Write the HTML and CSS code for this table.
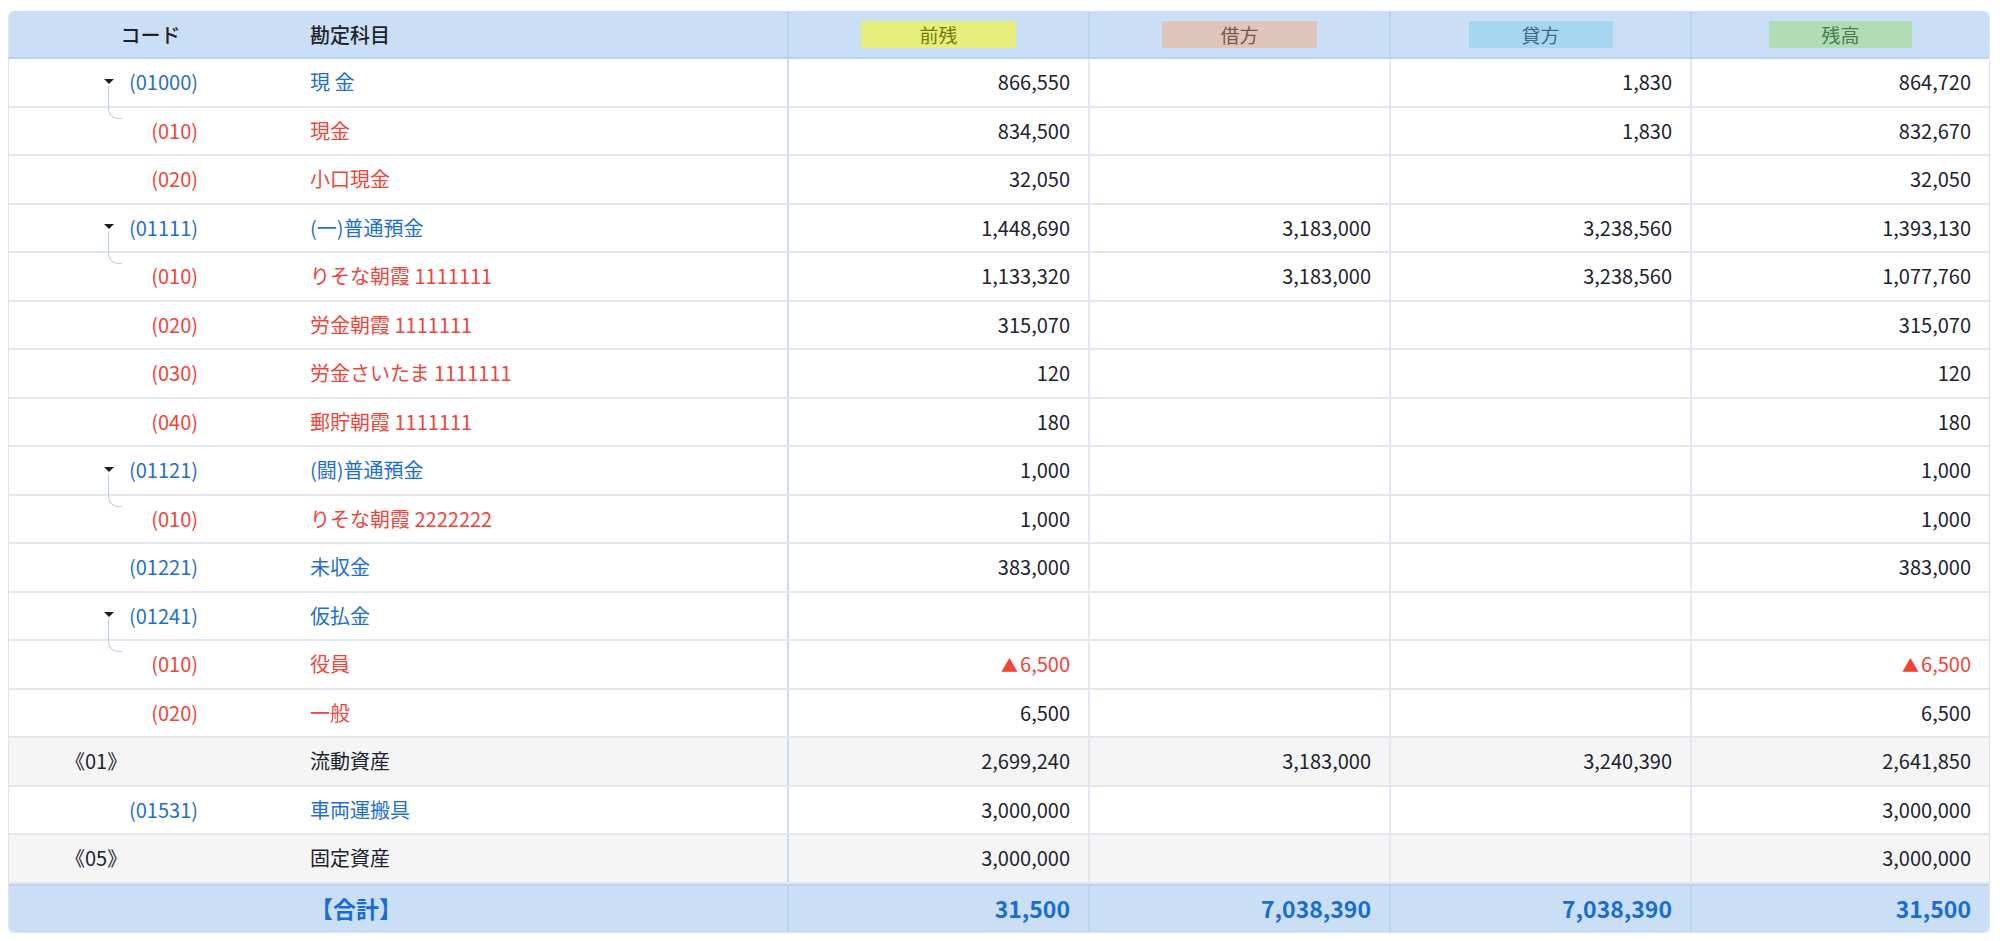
FILE: index.html
```html
<!DOCTYPE html>
<html lang="ja">
<head>
<meta charset="utf-8">
<title>残高試算表</title>
<link rel="stylesheet" href="styles.css">
</head>
<body>
<div class="page">
  <div class="sheet">
    <div class="row head">
      <div class="c code">コード</div>
      <div class="c name">勘定科目</div>
      <div class="c num first"><span class="tag t-prev">前残</span></div>
      <div class="c num"><span class="tag t-debit">借方</span></div>
      <div class="c num"><span class="tag t-credit">貸方</span></div>
      <div class="c num last"><span class="tag t-bal">残高</span></div>
    </div>

    <div class="row parent">
      <div class="c code"><span class="caret"></span><span>(01000)</span></div>
      <div class="c name">現 金</div>
      <div class="c num first">866,550</div>
      <div class="c num"></div>
      <div class="c num">1,830</div>
      <div class="c num last">864,720</div>
    </div>
    <div class="row child">
      <div class="c code">(010)</div>
      <div class="c name">現金</div>
      <div class="c num first">834,500</div>
      <div class="c num"></div>
      <div class="c num">1,830</div>
      <div class="c num last">832,670</div>
    </div>
    <div class="row child">
      <div class="c code">(020)</div>
      <div class="c name">小口現金</div>
      <div class="c num first">32,050</div>
      <div class="c num"></div>
      <div class="c num"></div>
      <div class="c num last">32,050</div>
    </div>

    <div class="row parent">
      <div class="c code"><span class="caret"></span><span>(01111)</span></div>
      <div class="c name">(一)普通預金</div>
      <div class="c num first">1,448,690</div>
      <div class="c num">3,183,000</div>
      <div class="c num">3,238,560</div>
      <div class="c num last">1,393,130</div>
    </div>
    <div class="row child">
      <div class="c code">(010)</div>
      <div class="c name">りそな朝霞 1111111</div>
      <div class="c num first">1,133,320</div>
      <div class="c num">3,183,000</div>
      <div class="c num">3,238,560</div>
      <div class="c num last">1,077,760</div>
    </div>
    <div class="row child">
      <div class="c code">(020)</div>
      <div class="c name">労金朝霞 1111111</div>
      <div class="c num first">315,070</div>
      <div class="c num"></div>
      <div class="c num"></div>
      <div class="c num last">315,070</div>
    </div>
    <div class="row child">
      <div class="c code">(030)</div>
      <div class="c name">労金さいたま 1111111</div>
      <div class="c num first">120</div>
      <div class="c num"></div>
      <div class="c num"></div>
      <div class="c num last">120</div>
    </div>
    <div class="row child">
      <div class="c code">(040)</div>
      <div class="c name">郵貯朝霞 1111111</div>
      <div class="c num first">180</div>
      <div class="c num"></div>
      <div class="c num"></div>
      <div class="c num last">180</div>
    </div>

    <div class="row parent">
      <div class="c code"><span class="caret"></span><span>(01121)</span></div>
      <div class="c name">(闘)普通預金</div>
      <div class="c num first">1,000</div>
      <div class="c num"></div>
      <div class="c num"></div>
      <div class="c num last">1,000</div>
    </div>
    <div class="row child">
      <div class="c code">(010)</div>
      <div class="c name">りそな朝霞 2222222</div>
      <div class="c num first">1,000</div>
      <div class="c num"></div>
      <div class="c num"></div>
      <div class="c num last">1,000</div>
    </div>

    <div class="row parent">
      <div class="c code"><span>(01221)</span></div>
      <div class="c name">未収金</div>
      <div class="c num first">383,000</div>
      <div class="c num"></div>
      <div class="c num"></div>
      <div class="c num last">383,000</div>
    </div>

    <div class="row parent">
      <div class="c code"><span class="caret"></span><span>(01241)</span></div>
      <div class="c name">仮払金</div>
      <div class="c num first"></div>
      <div class="c num"></div>
      <div class="c num"></div>
      <div class="c num last"></div>
    </div>
    <div class="row child">
      <div class="c code">(010)</div>
      <div class="c name">役員</div>
      <div class="c num first neg"><span class="tri">▲</span>6,500</div>
      <div class="c num"></div>
      <div class="c num"></div>
      <div class="c num last neg"><span class="tri">▲</span>6,500</div>
    </div>
    <div class="row child">
      <div class="c code">(020)</div>
      <div class="c name">一般</div>
      <div class="c num first">6,500</div>
      <div class="c num"></div>
      <div class="c num"></div>
      <div class="c num last">6,500</div>
    </div>

    <div class="row group">
      <div class="c code">《01》</div>
      <div class="c name">流動資産</div>
      <div class="c num first">2,699,240</div>
      <div class="c num">3,183,000</div>
      <div class="c num">3,240,390</div>
      <div class="c num last">2,641,850</div>
    </div>

    <div class="row parent">
      <div class="c code"><span>(01531)</span></div>
      <div class="c name">車両運搬具</div>
      <div class="c num first">3,000,000</div>
      <div class="c num"></div>
      <div class="c num"></div>
      <div class="c num last">3,000,000</div>
    </div>

    <div class="row group">
      <div class="c code">《05》</div>
      <div class="c name">固定資産</div>
      <div class="c num first">3,000,000</div>
      <div class="c num"></div>
      <div class="c num"></div>
      <div class="c num last">3,000,000</div>
    </div>

    <div class="row foot">
      <div class="c code"></div>
      <div class="c name">【合計】</div>
      <div class="c num first">31,500</div>
      <div class="c num">7,038,390</div>
      <div class="c num">7,038,390</div>
      <div class="c num last">31,500</div>
    </div>
  </div>
</div>
</body>
</html>
```

FILE: styles.css
```css
* { box-sizing: border-box; }

html, body {
  margin: 0;
  padding: 0;
  background: #ffffff;
}

body {
  font-family: "Noto Sans CJK JP", "Noto Sans", "Liberation Sans", sans-serif;
  font-size: 20px;
  color: #1d2330;
}

.page {
  padding: 11px 10px 0 8px;
}

.sheet {
  width: 1982px;
  border: 1px solid #dbe2ec;
  border-top-color: #c9ddf3;
  border-radius: 6px;
  overflow: hidden;
}

.row {
  display: grid;
  grid-template-columns: 283px 495px 301px 301px 301px 299px;
  height: 48.5px;
  border-bottom: 2px solid #e3e8f0;
}

.c {
  display: flex;
  align-items: center;
  min-width: 0;
  white-space: nowrap;
  line-height: 1;
}

.code {
  justify-content: flex-end;
  padding-right: 94px;
  position: relative;
}

.name {
  padding-left: 18px;
}

.num {
  justify-content: flex-end;
  padding-right: 18px;
  border-left: 2px solid #e3e8f0;
}

.num.first {
  border-left: 2px solid #cadcf2;
}

/* header */
.head {
  height: 47px;
  background: #cadff5;
  border-bottom: 2px solid #b9d2ef;
  font-weight: 500;
  color: #1f2329;
}

.head .code {
  justify-content: center;
  padding-right: 0;
}

.head .num {
  justify-content: center;
  padding-right: 0;
  border-left: 2px solid #bcd4ef;
}

.tag {
  display: flex;
  align-items: center;
  justify-content: center;
  height: 27px;
  font-weight: 400;
  font-size: 19px;
}

.t-prev { width: 155px; background: #e6ef7c; color: #79790f; }
.t-debit { width: 155px; background: #e0c5bc; color: #7c5646; }
.t-credit { width: 144px; background: #a7d7f0; color: #3f6a86; }
.t-bal { width: 143px; background: #b0ddb4; color: #4b7b4e; }

/* parents and children */
.parent .code,
.parent .name {
  color: #1f6fd1;
}

.child .code,
.child .name {
  color: #f0443a;
}

.caret {
  position: relative;
  width: 0;
  height: 0;
  margin-right: 15px;
  border-left: 5px solid transparent;
  border-right: 5px solid transparent;
  border-top: 5px solid #1d1f24;
  top: -1px;
}

.caret::after {
  content: "";
  position: absolute;
  left: -1px;
  top: 2px;
  width: 13px;
  height: 32px;
  border-left: 1.5px solid #b7cee9;
  border-bottom: 1.5px solid #b7cee9;
  border-bottom-left-radius: 10px;
}

.neg {
  color: #f0443a;
}

.tri {
  font-size: 17px;
  margin-right: 2px;
}

/* group subtotal rows */
.group {
  background: #f5f5f5;
}

.group .code {
  justify-content: flex-start;
  padding-left: 56px;
  padding-right: 0;
}

/* footer */
.foot {
  height: 48px;
  border-bottom: none;
  border-top: 2px solid #b9d3f0;
  background: #cadff5;
  color: #1a6dd0;
  font-weight: 700;
  font-size: 23px;
}

.foot .num {
  border-left: 2px solid #bcd4ef;
}
```
